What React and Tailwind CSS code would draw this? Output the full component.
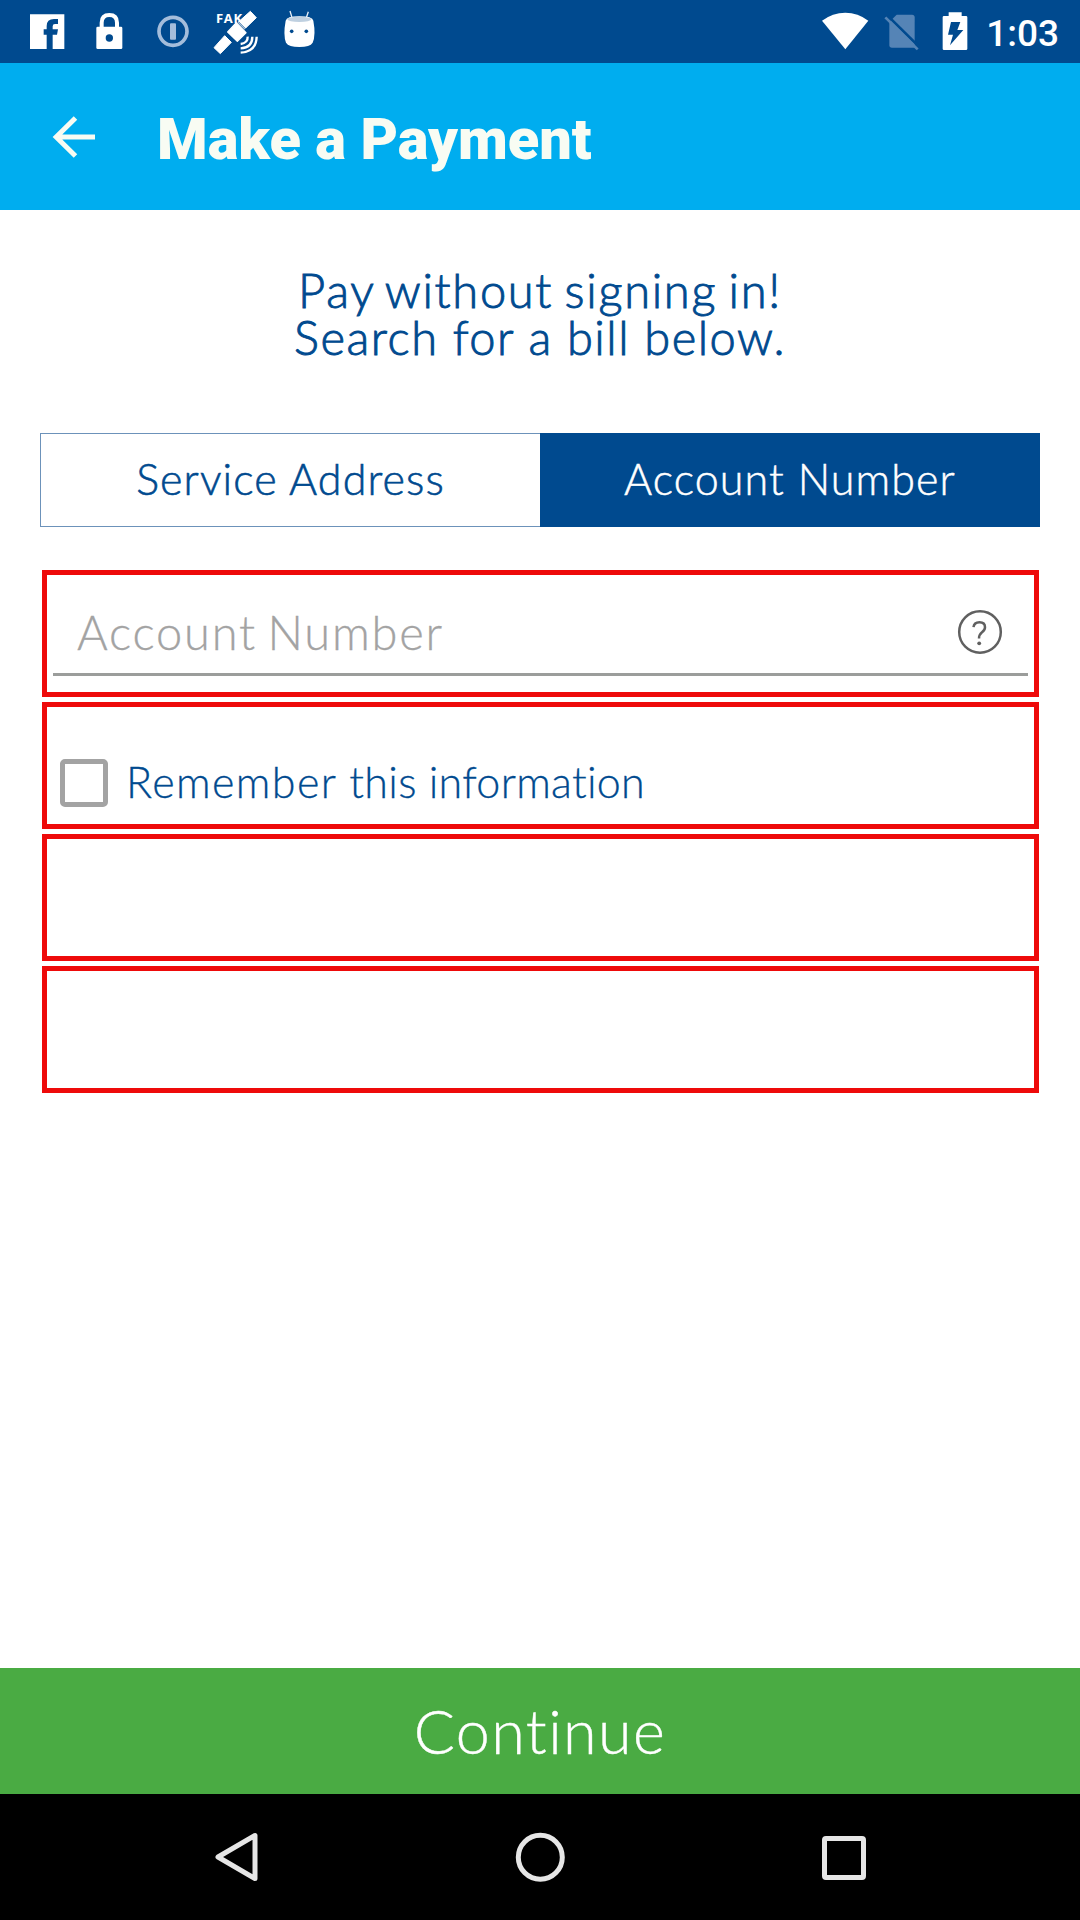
function StatusBar() {
  return (
    <header className="flex h-[63px] w-full shrink-0 items-center bg-[#004a8f] pl-7 text-white">
      {/* Facebook */}
      <svg className="h-[63px] w-[38px] shrink-0" viewBox="84 0 114 189" fill="#fff">
        <path d="M90 43H193V147H158V104H171L174 88H158V79Q158 72 165 72H174V57H162Q140 57 140 78V88H131V104H140V147H90Z" />
      </svg>
      {/* Lock */}
      <svg className="ml-7 h-[63px] w-[30px] shrink-0" viewBox="282 0 90 189">
        <path d="M305 84V68Q305 45 328 45Q351 45 351 68V84" fill="none" stroke="#fff" strokeWidth="12" />
        <rect x="289" y="80" width="78" height="67" rx="4" fill="#fff" />
        <circle cx="328" cy="114" r="11" fill="#004a8f" />
      </svg>
      {/* Password manager */}
      <svg className="ml-8 h-[63px] w-[34px] shrink-0" viewBox="468 0 102 189">
        <circle cx="519" cy="94" r="42" fill="none" stroke="#a4bddb" strokeWidth="11" />
        <rect x="510" y="70" width="18" height="49" rx="3" fill="#a4bddb" />
      </svg>
      {/* Fake GPS satellite */}
      <svg className="ml-[22px] h-[63px] w-12 shrink-0" viewBox="636 0 144 189">
        <text x="648" y="68" fontSize="39" fontWeight="700" fontFamily="Open Sans, sans-serif" letterSpacing="2" fill="#fff">FAK</text>
        <path d="M751 34L769 53L734 87L714 67Z" fill="#fff" stroke="#fff" strokeWidth="3" strokeLinejoin="round" />
        <path d="M709 68L738 98L712 124L683 96Z" fill="#fff" stroke="#fff" strokeWidth="4" strokeLinejoin="round" />
        <path d="M674 107L694 127L661 161L642 143Z" fill="#fff" stroke="#fff" strokeWidth="3" strokeLinejoin="round" />
        <path d="M716 66L740 90M680 99L705 124" fill="none" stroke="#004a8f" strokeWidth="2.5" />
        <g fill="none" stroke="#fff" strokeWidth="7">
          <path d="M743 110Q744 129 722 132" />
          <path d="M757 110Q757 143 722 145" />
          <path d="M770 110Q769 155 722 158" />
        </g>
      </svg>
      {/* Android head */}
      <svg className="ml-[22px] h-[63px] w-[34px] shrink-0" viewBox="846 0 102 189">
        <path d="M870 33L877 56M925 35L918 56" stroke="#e6eef6" strokeWidth="4" />
        <path d="M857 62Q860 49 898 49Q938 49 940 62Q948 105 938 128Q930 141 898 141Q866 141 858 128Q849 105 857 62Z" fill="#fff" />
        <ellipse cx="898" cy="58" rx="36" ry="8" fill="#bfd0e0" />
        <circle cx="875" cy="94" r="5.5" fill="#004a8f" />
        <circle cx="919" cy="94" r="5.5" fill="#004a8f" />
      </svg>

      <div className="ml-auto flex items-center pr-[21px]">
        {/* Wi-Fi */}
        <svg className="h-[63px] w-12 shrink-0" viewBox="63 0 144 189" fill="#fff">
          <path d="M66 62Q98 38 136 38Q174 38 205 62L136 148Z" />
        </svg>
        {/* No SIM */}
        <svg className="ml-[15px] h-[63px] w-9 shrink-0" viewBox="252 0 108 189">
          <path d="M290 44H336Q344 44 344 52V143H276Q268 143 268 135V66Z" fill="#5584b6" />
          <path d="M262 46L359 142" stroke="#004a8f" strokeWidth="8" />
          <path d="M256 52L353 148" stroke="#5584b6" strokeWidth="8" />
        </svg>
        {/* Charging battery */}
        <svg className="ml-[22px] h-[63px] w-[26px] shrink-0" viewBox="426 0 78 189">
          <path d="M446 37H485V48H498Q502 48 502 52V146Q502 150 498 150H432Q428 150 428 146V52Q428 48 432 48H446Z" fill="#fff" />
          <path d="M453 66H481L472 90H490L450 136L459 104H444Z" fill="#004a8f" />
        </svg>
        <span className="ml-[18px] mt-1 whitespace-nowrap font-[Roboto,sans-serif] text-[37px] leading-none font-medium">1:03</span>
      </div>
    </header>
  );
}

function Toolbar() {
  return (
    <div className="flex h-[147px] w-full shrink-0 items-center bg-[#00adef] pl-[50px] text-[#f8fcf3]">
      <svg className="h-12 w-12 shrink-0" viewBox="0 0 48 48" fill="none" stroke="currentColor" strokeWidth="5">
        <path d="M45 24H6M25.5 5L6.2 24L25.5 43" />
      </svg>
      <h1 className="mt-[7px] ml-[59px] whitespace-nowrap font-[Roboto,sans-serif] text-[57.8px] leading-none font-black">Make a Payment</h1>
    </div>
  );
}

function Cell({ children }) {
  return <div className="h-[127px] w-full border-[5px] border-[#ee0a0a]">{children}</div>;
}

function NavBar() {
  return (
    <nav className="flex h-[126px] w-full shrink-0 items-center bg-black pl-[212px] text-[#e6e6e6]">
      <svg className="h-[54px] w-[50px]" viewBox="0 0 50 54" fill="none" stroke="currentColor" strokeWidth="5" strokeLinejoin="round">
        <path d="M43 5.5V48.5L6 27Z" />
      </svg>
      <svg className="ml-[251px] h-[54px] w-[54px]" viewBox="0 0 54 54" fill="none" stroke="currentColor" strokeWidth="5">
        <circle cx="27.3" cy="27.3" r="22" />
      </svg>
      <div className="mt-px ml-[255px] h-11 w-11 rounded-[4px] border-[5px] border-current" />
    </nav>
  );
}

export default function App() {
  return (
    <div className="flex h-[1920px] w-[1080px] flex-col overflow-hidden bg-white font-[Lato,sans-serif] font-light">
      <StatusBar />
      <Toolbar />

      <main className="flex flex-1 flex-col">
        <p className="mt-[57px] h-[95px] text-center text-[47px] leading-[47px] tracking-[1.5px] whitespace-nowrap text-[#004a8f] [-webkit-text-stroke:0.9px_#004a8f]">
          <span className="tracking-[1.7px] [word-spacing:-3px]">Pay without signing in!</span>
          <br />
          Search for a bill below.
        </p>

        <div className="mx-10 mt-[71px] grid h-[94px] grid-cols-2 text-[43px] tracking-[1.1px] whitespace-nowrap [word-spacing:-2px]">
          <button className="flex items-center justify-center border border-r-0 border-[#6c92ba] pb-px text-[#004a8f] [-webkit-text-stroke:0.6px_#004a8f]">Service Address</button>
          <button className="flex items-center justify-center bg-[#004a8f] pb-px text-white [-webkit-text-stroke:0.5px_#fff]">Account Number</button>
        </div>

        <div className="mt-[43px] ml-[42px] flex w-[997px] flex-col gap-[5px]">
          <Cell>
            <div className="mx-1.5 flex h-[101px] items-center border-b-[3px] border-[#9b9d9b] pt-4 pr-[25px] pl-6">
              <span className="flex-1 text-[47px] leading-none tracking-[1.8px] whitespace-nowrap text-[#a3a3a3] [-webkit-text-stroke:0.3px_#a3a3a3] [word-spacing:-4px]">Account Number</span>
              <svg className="h-[46px] w-[46px] shrink-0" viewBox="0 0 46 46" fill="none" stroke="#606060" strokeWidth="2.5">
                <circle cx="23" cy="23" r="20.8" />
                <path d="M16.5 18.2Q17 13.2 22.5 13.2Q28 13.2 28 18.2Q28 21 25 23.2Q22 25.5 22 29.5" />
                <circle cx="22.2" cy="34.3" r="1.9" fill="#606060" stroke="none" />
              </svg>
            </div>
          </Cell>
          <Cell>
            <div className="flex h-full items-center pt-[31px] pl-[13px]">
              <span className="mt-1 h-12 w-12 shrink-0 rounded-[5px] border-[5px] border-[#a3a3a3]" />
              <span className="ml-[18px] text-[43px] leading-none tracking-[0.3px] whitespace-nowrap text-[#004a8f] [-webkit-text-stroke:0.3px_#004a8f]">
                <span className="tracking-[1.4px]">Remember</span> this information
              </span>
            </div>
          </Cell>
          <Cell />
          <Cell />
        </div>
      </main>

      <button className="flex h-[126px] w-full shrink-0 items-center justify-center bg-[#4aab43] pb-px text-[61px] leading-none tracking-[1.4px] text-white [-webkit-text-stroke:0.4px_#fff]">Continue</button>
      <NavBar />
    </div>
  );
}
